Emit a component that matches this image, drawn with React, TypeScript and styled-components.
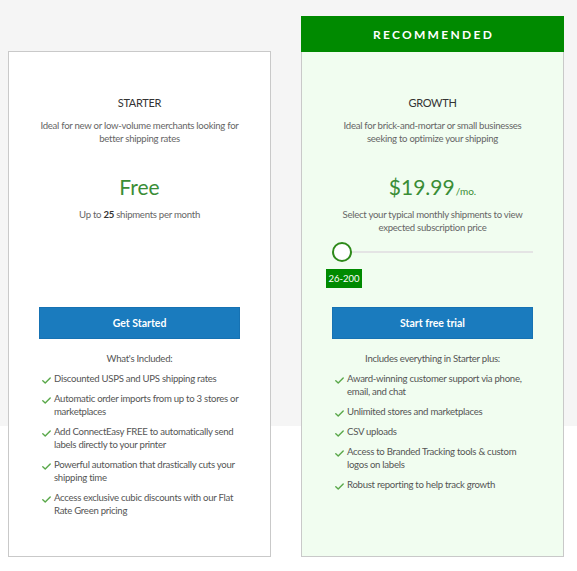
import React from "react";
import styled, { createGlobalStyle } from "styled-components";

const Global = createGlobalStyle`
  html, body { margin: 0; padding: 0; background: #fff; }
  body { font-family: Lato, "Open Sans", Arial, sans-serif; -webkit-font-smoothing: antialiased; }
  * { box-sizing: border-box; }
`;

const Page = styled.div`
  min-height: 571px;
  background: linear-gradient(to bottom, #f5f5f5 0, #f5f5f5 426px, #fff 426px);
  padding: 16px 0 0 8px;
`;

const Row = styled.div`
  display: flex;
  gap: 30px;
  align-items: flex-start;
`;

const Card = styled.div<{ $featured?: boolean }>`
  width: 263px;
  display: flex;
  flex-direction: column;
  margin-top: ${(p) => (p.$featured ? "0" : "35px")};
`;

const Banner = styled.div`
  height: 36px;
  background: #008a00;
  color: #fff;
  font-size: 12px;
  font-weight: 700;
  letter-spacing: 2.3px;
  display: flex;
  align-items: center;
  justify-content: center;
  padding-left: 2px;
`;

const Body = styled.div<{ $featured?: boolean }>`
  height: ${(p) => (p.$featured ? "505px" : "506px")};
  border: 1px solid #c9c9c9;
  border-top: ${(p) => (p.$featured ? "none" : "1px solid #c9c9c9")};
  background: ${(p) => (p.$featured ? "#f1fdf0" : "#fff")};
  display: flex;
  flex-direction: column;
  align-items: center;
  padding: 0 30px;
`;

const Top = styled.div`
  height: 255px;
  width: 100%;
  padding-top: 43px;
  display: flex;
  flex-direction: column;
  align-items: center;
  text-align: center;
`;

const Title = styled.div`
  font-size: 11px;
  line-height: 16px;
  letter-spacing: -0.3px;
  color: #333;
  text-transform: uppercase;
`;

const Desc = styled.p`
  margin: 8px 0 0;
  font-size: 9.6px;
  line-height: 13px;
  letter-spacing: -0.28px;
  color: #666;
  width: 205px;
`;

const Price = styled.div`
  margin-top: 27px;
  height: 30px;
  font-size: 21px;
  line-height: 30px;
  color: #3a8d36;
  display: flex;
  align-items: baseline;
`;

const Per = styled.span`
  font-size: 10px;
  margin-left: 1px;
`;

const Note = styled.p`
  margin: 5.5px 0 0;
  font-size: 9.6px;
  line-height: 13px;
  letter-spacing: -0.28px;
  color: #666;
  b { color: #333; font-weight: 700; }
`;

const Slider = styled.div`
  position: relative;
  width: 201px;
  height: 20px;
  margin-top: 8.5px;
  display: flex;
  align-items: center;
`;

const Track = styled.div`
  height: 2px;
  width: 100%;
  background: #e4e4e4;
`;

const Thumb = styled.div`
  position: absolute;
  left: 0;
  top: 0;
  width: 20px;
  height: 20px;
  border-radius: 50%;
  border: 2.5px solid #2e8a1a;
  background: #fff;
`;

const Badge = styled.div`
  align-self: flex-start;
  margin: 7px 0 0 -6px;
  width: 36px;
  height: 19px;
  background: #008a00;
  color: #fff;
  font-size: 9.5px;
  line-height: 19px;
  text-align: center;
`;

const Button = styled.button`
  width: 201px;
  height: 32px;
  border: 1px solid #1672b3;
  background: #1a7bbe;
  color: #fff;
  font-family: inherit;
  font-size: 10.5px;
  font-weight: 700;
  cursor: pointer;
  flex-shrink: 0;
`;

const ListHead = styled.div`
  margin-top: 13px;
  font-size: 9.6px;
  line-height: 13px;
  letter-spacing: -0.28px;
  color: #555;
`;

const List = styled.ul`
  list-style: none;
  margin: 7px 0 0;
  padding: 0;
  width: 201px;
  display: flex;
  flex-direction: column;
  gap: 7px;
`;

const Item = styled.li`
  display: flex;
  align-items: flex-start;
  font-size: 9.6px;
  line-height: 13px;
  letter-spacing: -0.28px;
  color: #555;
`;

const Check = styled.svg`
  flex-shrink: 0;
  width: 9px;
  height: 7px;
  margin: 5px 3px 0 3px;
`;

const CheckIcon = () => (
  <Check viewBox="0 0 9 7">
    <path d="M0.8 3.8 L3.2 6 L8.2 1" fill="none" stroke="#5aa84a" strokeWidth="1.4" strokeLinecap="round" strokeLinejoin="round" />
  </Check>
);

const starterItems = [
  "Discounted USPS and UPS shipping rates",
  "Automatic order imports from up to 3 stores or marketplaces",
  "Add ConnectEasy FREE to automatically send labels directly to your printer",
  "Powerful automation that drastically cuts your shipping time",
  "Access exclusive cubic discounts with our Flat Rate Green pricing",
];

const growthItems = [
  "Award-winning customer support via phone, email, and chat",
  "Unlimited stores and marketplaces",
  "CSV uploads",
  "Access to Branded Tracking tools & custom logos on labels",
  "Robust reporting to help track growth",
];

export default function App() {
  return (
    <>
      <Global />
      <Page>
        <Row>
          <Card>
            <Body>
              <Top>
                <Title>Starter</Title>
                <Desc>Ideal for new or low-volume merchants looking for better shipping rates</Desc>
                <Price>Free</Price>
                <Note>
                  Up to <b>25</b> shipments per month
                </Note>
              </Top>
              <Button>Get Started</Button>
              <ListHead>What's Included:</ListHead>
              <List>
                {starterItems.map((t) => (
                  <Item key={t}>
                    <CheckIcon />
                    <span>{t}</span>
                  </Item>
                ))}
              </List>
            </Body>
          </Card>
          <Card $featured>
            <Banner>RECOMMENDED</Banner>
            <Body $featured>
              <Top>
                <Title>Growth</Title>
                <Desc>Ideal for brick-and-mortar or small businesses seeking to optimize your shipping</Desc>
                <Price>
                  $19.99<Per>/mo.</Per>
                </Price>
                <Note>Select your typical monthly shipments to view expected subscription price</Note>
                <Slider>
                  <Track />
                  <Thumb />
                </Slider>
                <Badge>26-200</Badge>
              </Top>
              <Button>Start free trial</Button>
              <ListHead>Includes everything in Starter plus:</ListHead>
              <List>
                {growthItems.map((t) => (
                  <Item key={t}>
                    <CheckIcon />
                    <span>{t}</span>
                  </Item>
                ))}
              </List>
            </Body>
          </Card>
        </Row>
      </Page>
    </>
  );
}
